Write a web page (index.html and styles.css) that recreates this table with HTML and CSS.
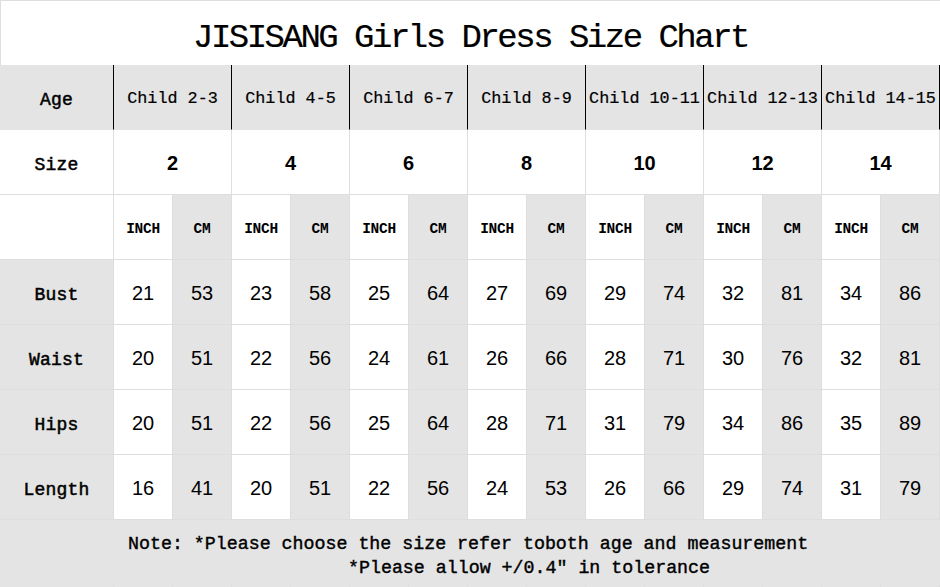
FILE: index.html
```html
<!DOCTYPE html>
<html>
<head>
<meta charset="utf-8">
<link rel="stylesheet" href="styles.css">
</head>
<body>
<div class="chart">
  <div class="cell title">JISISANG Girls Dress Size Chart</div>

  <div class="cell gray label age">Age</div>
  <div class="cell gray age span2 child">Child 2-3</div>
  <div class="cell gray age span2 child">Child 4-5</div>
  <div class="cell gray age span2 child">Child 6-7</div>
  <div class="cell gray age span2 child">Child 8-9</div>
  <div class="cell gray age span2 child">Child 10-11</div>
  <div class="cell gray age span2 child">Child 12-13</div>
  <div class="cell gray age span2 child">Child 14-15</div>

  <div class="cell label">Size</div>
  <div class="cell span2 size">2</div>
  <div class="cell span2 size">4</div>
  <div class="cell span2 size">6</div>
  <div class="cell span2 size">8</div>
  <div class="cell span2 size">10</div>
  <div class="cell span2 size">12</div>
  <div class="cell span2 size">14</div>

  <div class="cell label"></div>
  <div class="cell unit">INCH</div><div class="cell gray unit">CM</div>
  <div class="cell unit">INCH</div><div class="cell gray unit">CM</div>
  <div class="cell unit">INCH</div><div class="cell gray unit">CM</div>
  <div class="cell unit">INCH</div><div class="cell gray unit">CM</div>
  <div class="cell unit">INCH</div><div class="cell gray unit">CM</div>
  <div class="cell unit">INCH</div><div class="cell gray unit">CM</div>
  <div class="cell unit">INCH</div><div class="cell gray unit">CM</div>

  <div class="cell gray label">Bust</div>
  <div class="cell num">21</div><div class="cell gray num">53</div>
  <div class="cell num">23</div><div class="cell gray num">58</div>
  <div class="cell num">25</div><div class="cell gray num">64</div>
  <div class="cell num">27</div><div class="cell gray num">69</div>
  <div class="cell num">29</div><div class="cell gray num">74</div>
  <div class="cell num">32</div><div class="cell gray num">81</div>
  <div class="cell num">34</div><div class="cell gray num">86</div>

  <div class="cell gray label">Waist</div>
  <div class="cell num">20</div><div class="cell gray num">51</div>
  <div class="cell num">22</div><div class="cell gray num">56</div>
  <div class="cell num">24</div><div class="cell gray num">61</div>
  <div class="cell num">26</div><div class="cell gray num">66</div>
  <div class="cell num">28</div><div class="cell gray num">71</div>
  <div class="cell num">30</div><div class="cell gray num">76</div>
  <div class="cell num">32</div><div class="cell gray num">81</div>

  <div class="cell gray label">Hips</div>
  <div class="cell num">20</div><div class="cell gray num">51</div>
  <div class="cell num">22</div><div class="cell gray num">56</div>
  <div class="cell num">25</div><div class="cell gray num">64</div>
  <div class="cell num">28</div><div class="cell gray num">71</div>
  <div class="cell num">31</div><div class="cell gray num">79</div>
  <div class="cell num">34</div><div class="cell gray num">86</div>
  <div class="cell num">35</div><div class="cell gray num">89</div>

  <div class="cell gray label">Length</div>
  <div class="cell num">16</div><div class="cell gray num">41</div>
  <div class="cell num">20</div><div class="cell gray num">51</div>
  <div class="cell num">22</div><div class="cell gray num">56</div>
  <div class="cell num">24</div><div class="cell gray num">53</div>
  <div class="cell num">26</div><div class="cell gray num">66</div>
  <div class="cell num">29</div><div class="cell gray num">74</div>
  <div class="cell num">31</div><div class="cell gray num">79</div>

  <div class="cell gray note">
    <div class="note-line">Note: *Please choose the size refer toboth age and measurement</div>
    <div class="note-line second">*Please allow +/0.4″ in tolerance</div>
  </div>

  <div class="cell gray tail"></div>
  <div class="cell gray tail"></div><div class="cell gray tail"></div>
  <div class="cell gray tail"></div><div class="cell gray tail"></div>
  <div class="cell gray tail"></div><div class="cell gray tail"></div>
  <div class="cell gray tail"></div><div class="cell gray tail"></div>
  <div class="cell gray tail"></div><div class="cell gray tail"></div>
  <div class="cell gray tail"></div><div class="cell gray tail"></div>
  <div class="cell gray tail"></div><div class="cell gray tail"></div>
</div>
</body>
</html>
```

FILE: styles.css
```css
html, body {
  margin: 0;
  padding: 0;
  background: #ffffff;
}

.chart {
  width: 940px;
  height: 587px;
  overflow: hidden;
  display: grid;
  grid-template-columns: 114px repeat(14, 59px);
  grid-template-rows: 65px repeat(8, 65px) 65px 10px;
  font-family: "Liberation Mono", "DejaVu Sans Mono", monospace;
  color: #000;
}

.cell {
  box-sizing: border-box;
  border-right: 1px solid #dedede;
  border-bottom: 1px solid #dedede;
  background: #ffffff;
  display: flex;
  align-items: center;
  justify-content: center;
  white-space: pre;
}

.gray {
  background: #e4e4e4;
}

.span2 {
  grid-column: span 2;
}

.title {
  grid-column: 1 / -1;
  border-top: 1px solid #dedede;
  border-left: 1px solid #dedede;
  border-bottom: none;
  border-right: none;
  font-size: 34px;
  letter-spacing: -2.5px;
  padding-top: 9px;
  -webkit-text-stroke: 0.2px #000;
}

.age {
  border-right: 1px solid #000;
  border-bottom: 1px solid #e4e4e4;
}

.child {
  font-size: 16.8px;
  padding-top: 3px;
  -webkit-text-stroke: 0.2px #000;
}

.label {
  font-size: 18px;
  letter-spacing: 0.2px;
  padding-top: 6px;
  -webkit-text-stroke: 0.5px #000;
}

.size {
  font-family: "Liberation Sans", Arial, sans-serif;
  font-weight: bold;
  font-size: 20px;
  padding-top: 2px;
}

.unit {
  font-size: 14.5px;
  font-weight: bold;
  letter-spacing: -0.3px;
  padding-top: 3px;
}

.num {
  font-family: "Liberation Sans", Arial, sans-serif;
  font-size: 20px;
  padding-top: 2px;
}

.note {
  grid-column: 1 / -1;
  flex-direction: column;
  align-items: flex-start;
  justify-content: flex-start;
  padding: 12px 0 0 128px;
  font-size: 18.3px;
  line-height: 24px;
  -webkit-text-stroke: 0.4px #000;
  border-right: none;
  border-bottom-color: #e4e4e4;
}

.note-line.second {
  padding-left: 220px;
}

.tail {
  border-bottom: none;
}
```
